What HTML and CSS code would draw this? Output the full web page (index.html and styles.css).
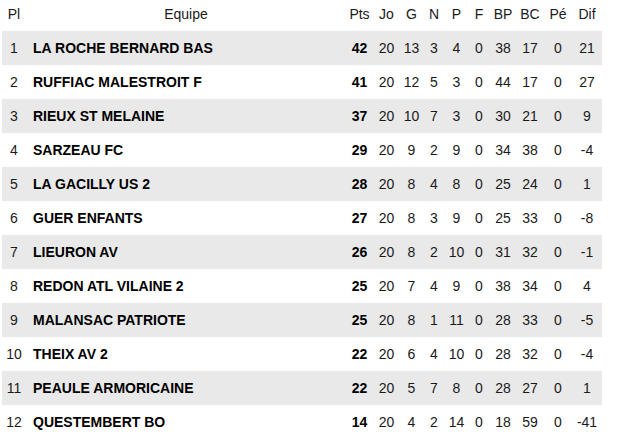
FILE: index.html
```html
<!DOCTYPE html>
<html lang="fr">
<head>
<meta charset="utf-8">
<title>Classement</title>
<link rel="stylesheet" href="styles.css">
</head>
<body>
<div class="wrap">
<table class="standings">
  <colgroup>
    <col class="c-pl"><col class="c-team"><col class="c-pts"><col class="c-jo"><col class="c-g"><col class="c-n"><col class="c-p"><col class="c-f"><col class="c-bp"><col class="c-bc"><col class="c-pe"><col class="c-dif">
  </colgroup>
  <thead>
    <tr><th>Pl</th><th>Equipe</th><th>Pts</th><th>Jo</th><th>G</th><th>N</th><th>P</th><th>F</th><th>BP</th><th>BC</th><th>Pé</th><th>Dif</th></tr>
  </thead>
  <tbody>
    <tr><td>1</td><td class="team">LA ROCHE BERNARD BAS</td><td class="pts">42</td><td>20</td><td>13</td><td>3</td><td>4</td><td>0</td><td>38</td><td>17</td><td>0</td><td>21</td></tr>
    <tr><td>2</td><td class="team">RUFFIAC MALESTROIT F</td><td class="pts">41</td><td>20</td><td>12</td><td>5</td><td>3</td><td>0</td><td>44</td><td>17</td><td>0</td><td>27</td></tr>
    <tr><td>3</td><td class="team">RIEUX ST MELAINE</td><td class="pts">37</td><td>20</td><td>10</td><td>7</td><td>3</td><td>0</td><td>30</td><td>21</td><td>0</td><td>9</td></tr>
    <tr><td>4</td><td class="team">SARZEAU FC</td><td class="pts">29</td><td>20</td><td>9</td><td>2</td><td>9</td><td>0</td><td>34</td><td>38</td><td>0</td><td>-4</td></tr>
    <tr><td>5</td><td class="team">LA GACILLY US 2</td><td class="pts">28</td><td>20</td><td>8</td><td>4</td><td>8</td><td>0</td><td>25</td><td>24</td><td>0</td><td>1</td></tr>
    <tr><td>6</td><td class="team">GUER ENFANTS</td><td class="pts">27</td><td>20</td><td>8</td><td>3</td><td>9</td><td>0</td><td>25</td><td>33</td><td>0</td><td>-8</td></tr>
    <tr><td>7</td><td class="team">LIEURON AV</td><td class="pts">26</td><td>20</td><td>8</td><td>2</td><td>10</td><td>0</td><td>31</td><td>32</td><td>0</td><td>-1</td></tr>
    <tr><td>8</td><td class="team">REDON ATL VILAINE 2</td><td class="pts">25</td><td>20</td><td>7</td><td>4</td><td>9</td><td>0</td><td>38</td><td>34</td><td>0</td><td>4</td></tr>
    <tr><td>9</td><td class="team">MALANSAC PATRIOTE</td><td class="pts">25</td><td>20</td><td>8</td><td>1</td><td>11</td><td>0</td><td>28</td><td>33</td><td>0</td><td>-5</td></tr>
    <tr><td>10</td><td class="team">THEIX AV 2</td><td class="pts">22</td><td>20</td><td>6</td><td>4</td><td>10</td><td>0</td><td>28</td><td>32</td><td>0</td><td>-4</td></tr>
    <tr><td>11</td><td class="team">PEAULE ARMORICAINE</td><td class="pts">22</td><td>20</td><td>5</td><td>7</td><td>8</td><td>0</td><td>28</td><td>27</td><td>0</td><td>1</td></tr>
    <tr><td>12</td><td class="team">QUESTEMBERT BO</td><td class="pts">14</td><td>20</td><td>4</td><td>2</td><td>14</td><td>0</td><td>18</td><td>59</td><td>0</td><td>-41</td></tr>
  </tbody>
</table>
</div>
</body>
</html>
```
FILE: styles.css
```css
html, body {
  margin: 0;
  padding: 0;
  background: #ffffff;
}

body {
  font-family: "Liberation Sans", Arial, sans-serif;
  font-size: 14px;
  color: #1a1a1a;
}

.wrap {
  padding: 0 2px;
}

.standings {
  width: 600px;
  border-collapse: collapse;
  border-spacing: 0;
  table-layout: fixed;
}

.c-pl { width: 24px; }
.c-team { width: 320px; }
.c-pts { width: 27px; }
.c-jo { width: 27px; }
.c-g { width: 23px; }
.c-n { width: 22px; }
.c-p { width: 23px; }
.c-f { width: 22px; }
.c-bp { width: 26px; }
.c-bc { width: 28px; }
.c-pe { width: 28px; }
.c-dif { width: 30px; }

.standings th {
  height: 31px;
  padding: 0 0 3px 0;
  box-sizing: border-box;
  font-weight: normal;
  text-align: center;
  vertical-align: middle;
  line-height: 16px;
  white-space: nowrap;
}

.standings td {
  height: 34px;
  padding: 0;
  box-sizing: border-box;
  text-align: center;
  vertical-align: middle;
  line-height: 16px;
  white-space: nowrap;
}

.standings tbody tr:nth-child(odd) td {
  background: #e9e9e9;
}

.standings td.team {
  text-align: left;
  padding-left: 7px;
  font-weight: bold;
  color: #000;
}

.standings td.pts {
  font-weight: bold;
  color: #000;
}
```
